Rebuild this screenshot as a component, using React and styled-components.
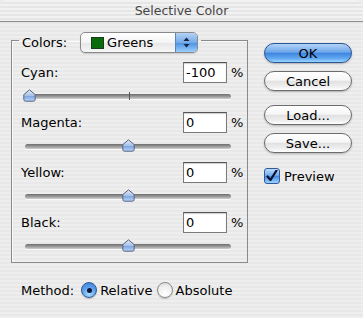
import React from "react";
import styled, { createGlobalStyle } from "styled-components";

const GlobalStyle = createGlobalStyle`
  html, body {
    margin: 0;
    padding: 0;
    background: #ececec;
  }
  body {
    font-family: "DejaVu Sans", "Liberation Sans", sans-serif;
    font-size: 13px;
    color: #000;
  }
`;

const stripes = `repeating-linear-gradient(
  to bottom,
  #eeeeee 0px,
  #eeeeee 2px,
  #e8e8e8 2px,
  #e8e8e8 4px
)`;

const Window = styled.div`
  width: 363px;
  height: 318px;
  overflow: hidden;
  background: ${stripes};
  border-radius: 8px 8px 0 0;
`;

const TitleBar = styled.div`
  height: 21px;
  border-bottom: 1px solid #8c8c8c;
  display: flex;
  align-items: center;
  justify-content: center;
  font-size: 12.5px;
  color: #454545;
  background: repeating-linear-gradient(
    to bottom,
    #f2f2f2 0px,
    #f2f2f2 2px,
    #e6e6e6 2px,
    #e6e6e6 4px
  );
`;

const Body = styled.div`
  display: flex;
  align-items: flex-start;
`;

const LeftCol = styled.div`
  margin-left: 11px;
  display: flex;
  flex-direction: column;
`;

const Group = styled.fieldset`
  margin: 6px 0 0 0;
  padding: 0;
  width: 235px;
  border: 1px solid #8a8a8a;
  box-shadow: inset 1px 1px 0 rgba(255, 255, 255, 0.7);
  min-width: 0;
`;

const Legend = styled.legend`
  margin-left: 7px;
  padding: 4px 3px 0 3px;
  display: flex;
  align-items: center;
  gap: 13px;
  height: 21px;
`;

const PopupButton = styled.div`
  width: 116px;
  height: 19px;
  border: 1px solid #8a8a8a;
  border-radius: 5px;
  display: flex;
  align-items: center;
  overflow: hidden;
  background: linear-gradient(#ffffff, #f4f4f4 50%, #e6e6e6 51%, #f7f7f7);
  box-shadow: 0 1px 1px rgba(0, 0, 0, 0.15);
`;

const Swatch = styled.span`
  width: 11px;
  height: 10px;
  margin-left: 10px;
  background: ${({ color }) => color};
  border: 1px solid #1e3a1e;
`;

const PopupText = styled.span`
  margin-left: 3px;
  flex: 1;
`;

const PopupArrows = styled.span`
  width: 21px;
  height: 100%;
  border-left: 1px solid #5a84c0;
  background: linear-gradient(#b5d3f6, #74abea 50%, #4a8fe2 51%, #9ccfff);
  display: flex;
  align-items: center;
  justify-content: center;
`;

const Sections = styled.div`
  padding-top: 9px;
`;

const Section = styled.div`
  height: 50px;
`;

const FieldRow = styled.div`
  height: 21px;
  display: flex;
  align-items: center;
  padding: 0 6px 0 9px;
`;

const Label = styled.span`
  flex: 1;
`;

const NumberBox = styled.div`
  width: 40px;
  height: 19px;
  padding-left: 2px;
  border: 1px solid #7a7a7a;
  border-top-color: #555;
  background: #fff;
  box-shadow: inset 0 1px 1px rgba(0, 0, 0, 0.2);
  display: flex;
  align-items: center;
`;

const Percent = styled.span`
  margin-left: 4px;
  width: 10px;
`;

const SliderWrap = styled.div`
  position: relative;
  height: 29px;
  padding: 11px 16px 0 13px;
  box-sizing: border-box;
`;

const Groove = styled.div`
  height: 5px;
  border-radius: 3px;
  background: linear-gradient(#6e6e6e, #9a9a9a 50%, #cfcfcf);
  box-shadow: 0 1px 0 rgba(255, 255, 255, 0.8);
`;

const Tick = styled.div`
  position: absolute;
  left: 117px;
  top: 9px;
  width: 1px;
  height: 8px;
  background: #555;
`;

const ThumbBox = styled.svg`
  position: absolute;
  top: 6px;
`;

const MethodRow = styled.div`
  margin-top: 19px;
  height: 16px;
  display: flex;
  align-items: center;
  padding-left: 10px;
`;

const MethodLabel = styled.span`
  margin-right: 7px;
`;

const RadioDot = styled.span`
  width: 14px;
  height: 14px;
  border-radius: 50%;
  border: 1px solid ${({ checked }) => (checked ? "#2e5a9a" : "#8a8a8a")};
  background: ${({ checked }) =>
    checked
      ? "radial-gradient(circle at 50% 80%, #a8dcff, #5c9ce8 55%, #3b7cd6)"
      : "radial-gradient(circle at 50% 80%, #ffffff, #f0f0f0 55%, #d6d6d6)"};
  display: flex;
  align-items: center;
  justify-content: center;
  box-shadow: 0 1px 1px rgba(0, 0, 0, 0.2);
  &::after {
    content: "";
    display: ${({ checked }) => (checked ? "block" : "none")};
    width: 5px;
    height: 5px;
    border-radius: 50%;
    background: #10183a;
  }
`;

const RadioText = styled.span`
  margin-left: 3px;
  margin-right: ${({ last }) => (last ? "0" : "4px")};
`;

const RightCol = styled.div`
  margin-left: 16px;
  margin-top: 21px;
  width: 88px;
  display: flex;
  flex-direction: column;
`;

const AquaButton = styled.div`
  height: 18px;
  margin-top: ${({ gap }) => gap}px;
  border: 1px solid ${({ primary }) => (primary ? "#2a5595" : "#6c6c6c")};
  border-radius: 10px;
  display: flex;
  align-items: center;
  justify-content: center;
  background: ${({ primary }) =>
    primary
      ? "linear-gradient(#b4d4f7, #6ea6ea 45%, #3f86df 52%, #62a8f2 80%, #9ad6ff)"
      : "linear-gradient(#ffffff, #f6f6f6 45%, #e2e2e2 52%, #eeeeee 80%, #ffffff)"};
  box-shadow: 0 1px 2px rgba(0, 0, 0, 0.25);
`;

const CheckRow = styled.div`
  margin-top: 15px;
  display: flex;
  align-items: center;
`;

const CheckBox = styled.span`
  width: 14px;
  height: 14px;
  border: 1px solid #2e5a9a;
  border-radius: 3px;
  background: linear-gradient(#bcdcfb, #6aa6ea 50%, #4189e0 51%, #9dd3ff);
  display: flex;
  align-items: center;
  justify-content: center;
`;

const CheckText = styled.span`
  margin-left: 4px;
`;

function Thumb({ left }) {
  return (
    <ThumbBox width="13" height="13" viewBox="0 0 13 13" style={{ left }}>
      <defs>
        <linearGradient id="thumbFill" x1="0" y1="0" x2="0" y2="1">
          <stop offset="0" stopColor="#e4ecf8" />
          <stop offset="0.5" stopColor="#a9c2e8" />
          <stop offset="0.55" stopColor="#7ea3dc" />
          <stop offset="1" stopColor="#b8d6ff" />
        </linearGradient>
      </defs>
      <path
        d="M6.5 0.8 L12.2 5.6 L12.2 10.4 Q12.2 12.2 10.4 12.2 L2.6 12.2 Q0.8 12.2 0.8 10.4 L0.8 5.6 Z"
        fill="url(#thumbFill)"
        stroke="#56647e"
        strokeWidth="1"
      />
    </ThumbBox>
  );
}

function Slider({ value }) {
  const left = 11 + (value + 100) * 0.985;
  return (
    <SliderWrap>
      <Groove />
      <Tick />
      <Thumb left={left} />
    </SliderWrap>
  );
}

const channels = [
  { name: "Cyan", value: -100 },
  { name: "Magenta", value: 0 },
  { name: "Yellow", value: 0 },
  { name: "Black", value: 0 },
];

export default function App() {
  return (
    <>
      <GlobalStyle />
      <Window>
        <TitleBar>Selective Color</TitleBar>
        <Body>
          <LeftCol>
            <Group>
              <Legend>
                <span>Colors:</span>
                <PopupButton>
                  <Swatch color="#0a6b0a" />
                  <PopupText>Greens</PopupText>
                  <PopupArrows>
                    <svg width="7" height="11" viewBox="0 0 7 11">
                      <path d="M3.5 0.5 L6.5 4 L0.5 4 Z" fill="#1a2440" />
                      <path d="M0.5 7 L6.5 7 L3.5 10.5 Z" fill="#1a2440" />
                    </svg>
                  </PopupArrows>
                </PopupButton>
              </Legend>
              <Sections>
                {channels.map((c) => (
                  <Section key={c.name}>
                    <FieldRow>
                      <Label>{c.name}:</Label>
                      <NumberBox>{c.value}</NumberBox>
                      <Percent>%</Percent>
                    </FieldRow>
                    <Slider value={c.value} />
                  </Section>
                ))}
              </Sections>
            </Group>
            <MethodRow>
              <MethodLabel>Method:</MethodLabel>
              <RadioDot checked />
              <RadioText>Relative</RadioText>
              <RadioDot />
              <RadioText last>Absolute</RadioText>
            </MethodRow>
          </LeftCol>
          <RightCol>
            <AquaButton primary gap={0}>OK</AquaButton>
            <AquaButton gap={8}>Cancel</AquaButton>
            <AquaButton gap={14}>Load...</AquaButton>
            <AquaButton gap={8}>Save...</AquaButton>
            <CheckRow>
              <CheckBox>
                <svg width="12" height="12" viewBox="0 0 12 12">
                  <path
                    d="M1.5 6.5 L4.5 10 L10.5 0.5"
                    fill="none"
                    stroke="#0c1230"
                    strokeWidth="2.2"
                    strokeLinecap="round"
                    strokeLinejoin="round"
                  />
                </svg>
              </CheckBox>
              <CheckText>Preview</CheckText>
            </CheckRow>
          </RightCol>
        </Body>
      </Window>
    </>
  );
}
